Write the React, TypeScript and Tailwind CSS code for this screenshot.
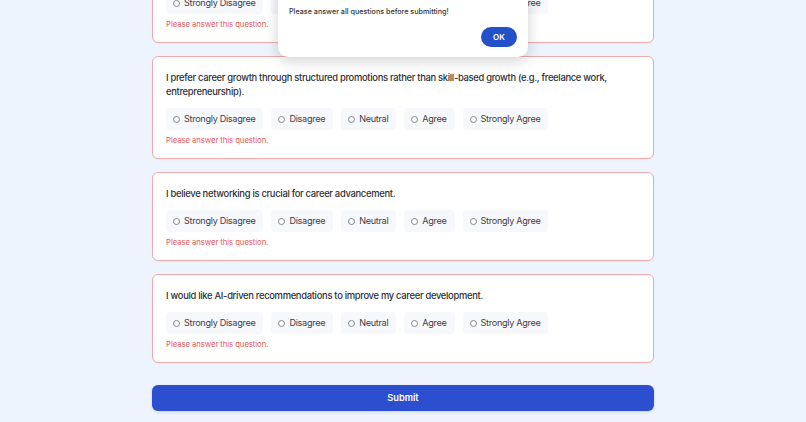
import React from 'react';

const OPTIONS = ['Strongly Disagree', 'Disagree', 'Neutral', 'Agree', 'Strongly Agree'];

const QUESTIONS = [
  'I am confident in my current career path and long-term goals.',
  'I prefer career growth through structured promotions rather than skill-based growth (e.g., freelance work, entrepreneurship).',
  'I believe networking is crucial for career advancement.',
  'I would like AI-driven recommendations to improve my career development.',
];

// Tarjeta de pregunta con estado de error
const QuestionCard: React.FC<{ text: string; name: string }> = ({ text, name }) => (
  <div className="bg-white border border-[#eeabab] rounded-[6px] px-[13px] pt-[14px] pb-[12px] shadow-[0_1px_2px_rgba(0,0,0,0.04)]">
    <p className="text-[9.4px] leading-[14px] font-medium tracking-[-0.3px] text-[#2b2f36]">{text}</p>
    <div className="mt-[9px] flex gap-[8px]">
      {OPTIONS.map((opt) => (
        <label
          key={opt}
          className="h-[22px] flex items-center gap-[4px] pl-[7px] pr-[8px] bg-[#f6f8fb] rounded-[4px] text-[9.1px] tracking-[-0.3px] text-[#3c414b]"
        >
          <span className="w-[7px] h-[7px] rounded-full border border-[#80868f] bg-white" />
          <input type="radio" name={name} className="hidden" />
          {opt}
        </label>
      ))}
    </div>
    <p className="mt-[4px] text-[7.8px] leading-[12px] tracking-[-0.1px] text-[#e25c5c]">Please answer this question.</p>
  </div>
);

export default function App() {
  return (
    <div
      className="relative w-full h-[422px] overflow-hidden bg-[#eef4fd]"
      style={{ fontFamily: 'Inter, "Liberation Sans", sans-serif' }}
    >
      <div className="w-[502px] mx-auto -mt-[46px] flex flex-col gap-[13px]">
        {QUESTIONS.map((q, i) => (
          <QuestionCard key={i} text={q} name={`q${i}`} />
        ))}
        <button className="mt-[9px] h-[26px] w-full rounded-[6px] bg-[#2b4fce] text-white text-[9.2px] font-semibold shadow-[0_1px_3px_rgba(0,0,0,0.15)]">
          Submit
        </button>
      </div>

      {/* Diálogo de alerta */}
      <div className="absolute left-1/2 -translate-x-1/2 top-[-17px] w-[250px] bg-white rounded-[10px] shadow-[0_4px_14px_rgba(0,0,0,0.18)] px-[11px] pt-[6px] pb-[10px]">
        <p className="text-[8.5px] leading-[12px] font-semibold text-[#222]">localhost:5173 says</p>
        <p className="mt-[5px] text-[7.2px] leading-[12px] font-medium text-[#333]">
          Please answer all questions before submitting!
        </p>
        <div className="mt-[9px] flex justify-end">
          <button className="h-[20px] w-[36px] rounded-full bg-[#2451c9] text-white text-[8px] font-semibold">
            OK
          </button>
        </div>
      </div>
    </div>
  );
}
